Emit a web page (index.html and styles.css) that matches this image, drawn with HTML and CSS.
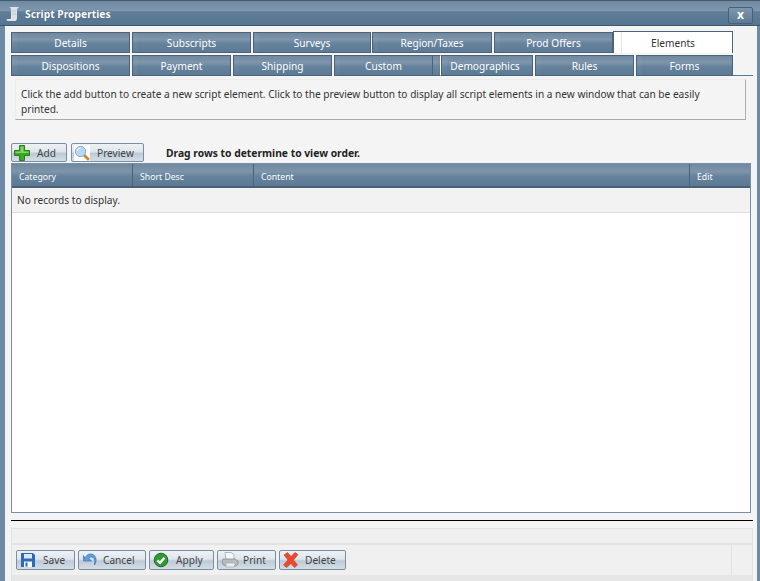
FILE: index.html
```html
<!DOCTYPE html>
<html lang="en">
<head>
<meta charset="utf-8">
<title>Script Properties</title>
<link rel="stylesheet" href="styles.css">
</head>
<body>
<div class="window">
  <header class="titlebar">
    <svg class="title-icon" width="14" height="16" viewBox="0 0 14 16"><path d="M3 1h10l-2 2v9c0 2-1 3-2 3H2c-1 0-2-1-1-2h3c1 0 1-1 1-2V4C5 2 4 1 3 1z" fill="#dfe3e7"/><path d="M6 5h4M6 8h4" stroke="#b9c2ca"/></svg>
    <span class="title-text">Script Properties</span>
    <button class="close">x</button>
  </header>
  <main class="body">
    <div class="tabrow row1">
      <div class="tab t1">Details</div>
      <div class="tab t2">Subscripts</div>
      <div class="tab t3">Surveys</div>
      <div class="tab t4">Region/Taxes</div>
      <div class="tab t5">Prod Offers</div>
      <div class="tab active">Elements</div>
    </div>
    <div class="tabrow row2">
      <div class="tab w120">Dispositions</div>
      <div class="tab w100">Payment</div>
      <div class="tab w100">Shipping</div>
      <div class="tab w100">Custom</div>
      <div class="tab strip"></div>
      <div class="tab demo">Demographics</div>
      <div class="tab w100">Rules</div>
      <div class="tab last">Forms</div>
      <div class="tab-rule"></div>
    </div>
    <div class="info">Click the add button to create a new script element. Click to the preview button to display all script elements in a new window that can be easily printed.</div>
    <div class="toolbar">
      <button class="btn small add">
        <svg width="16" height="16" viewBox="0 0 16 16"><path d="M5.500 .5h5v5h5v5h-5v5h-5v-5h-5v-5h5z" fill="#3fa52a" stroke="#2a7d1e"/><path d="M6.500 1.500h3v5h5v1.500h-13v-1.500h5z" fill="#83d662"/></svg>
        <span>Add</span>
      </button>
      <button class="btn small preview">
        <svg width="16" height="16" viewBox="0 0 16 16"><rect width="16" height="16" fill="#fff"/><path d="M9.500 9.500l4.500 4.500" stroke="#c98a3c" stroke-width="3" stroke-linecap="round"/><circle cx="6.500" cy="6.500" r="5.200" fill="#b5d9f5" stroke="#8ba6c6"/><path d="M3.300 6a3.400 3 0 0 1 3.200-3" stroke="#fff" fill="none"/></svg>
        <span>Preview</span>
      </button>
      <strong class="hint">Drag rows to determine to view order.</strong>
    </div>
    <section class="grid">
      <div class="grid-head">
        <div class="col c-cat">Category</div>
        <div class="col c-desc">Short Desc</div>
        <div class="col c-content">Content</div>
        <div class="col c-edit">Edit</div>
      </div>
      <div class="grid-empty">No records to display.</div>
    </section>
    <hr class="rule">
    <div class="footer">
      <div class="footer-top"></div>
      <div class="footer-main">
        <div class="actions">
          <button class="btn action">
            <svg width="16" height="16" viewBox="0 0 16 16"><path d="M1 1h12l2 2v12H1z" fill="#2e68b8"/><rect x="4" y="2" width="8" height="4.500" fill="#dfe9f4"/><rect x="4" y="9.500" width="8" height="5.500" fill="#f4f7fa"/><rect x="5.500" y="10.500" width="2" height="4" fill="#2e68b8"/></svg>
            <span>Save</span>
          </button>
          <button class="btn action">
            <svg width="16" height="16" viewBox="0 0 16 16"><path d="M3 6.500C4 3 7.500 1 11 2.500c3.500 2 4 6.500 1.500 10.500 .5-3 .5-6-1.500-7.500-1.500-1-3-.5-4 1L9.500 9H1.500V3.500z" fill="#5f9edb" stroke="#3b72ae" stroke-width=".7"/></svg>
            <span>Cancel</span>
          </button>
          <button class="btn action">
            <svg width="16" height="16" viewBox="0 0 16 16"><circle cx="8" cy="8" r="6.800" fill="#2f9a35" stroke="#1e6b24"/><path d="M4.500 8.300l2.500 2.500 4.500-5" fill="none" stroke="#fff" stroke-width="2.400"/></svg>
            <span>Apply</span>
          </button>
          <button class="btn action">
            <svg width="18" height="16" viewBox="0 0 18 16"><path d="M4 .5h6l3 2v5H5z" fill="#f6f7f8" stroke="#a5a9ad" stroke-width=".8"/><path d="M2 7h12l3 2v3l-2 2H5l-3-1.500L1 9z" fill="#b8bbbe" stroke="#888c90" stroke-width=".8"/><path d="M5 11h8l1 1.500-1 2.500H5z" fill="#eceded" stroke="#a2a5a8" stroke-width=".6"/></svg>
            <span>Print</span>
          </button>
          <button class="btn action">
            <svg width="16" height="16" viewBox="0 0 16 16"><path d="M1 3l3.500-2.500L8 4.500 12 .5 15 2.500 10.500 8l4 5-3 2.500L8 11.500 3.500 15.500.5 13 5 8z" fill="#ea4a2e" stroke="#cc351e" stroke-width=".6"/></svg>
            <span>Delete</span>
          </button>
        </div>
        <div class="footer-end"></div>
      </div>
      <div class="footer-band"></div>
    </div>
  </main>
</div>
</body>
</html>
```

FILE: styles.css
```css
* { box-sizing: border-box; }
html, body { margin: 0; padding: 0; }
body {
  width: 760px;
  height: 581px;
  overflow: hidden;
  font-family: "Noto Sans", "Open Sans", sans-serif;
  font-size: 10.150px;
  color: #333;
}
.window {
  width: 760px;
  height: 581px;
  display: flex;
  flex-direction: column;
  background: #6d8aa6;
}
.titlebar {
  height: 26px;
  flex: none;
  display: flex;
  align-items: center;
  padding: 1px 7px 0 6px;
  border-top: 1px solid #46596d;
  border-bottom: 1px solid #3f5568;
  background: linear-gradient(#7089a2 0, #7f97ad 40%, #5f7d98 45%, #567590 100%);
  color: #fff;
}
.title-icon { margin-right: 5px; }
.title-text { font-weight: 700; font-size: 10.300px; text-shadow: 0 0 1px #33495c; }
.close {
  margin-left: auto;
  margin-top: 3px;
  width: 25px;
  height: 17px;
  padding: 0;
  border: 1px solid #46607a;
  border-radius: 2px;
  background: linear-gradient(#7f96ac, #5c7a95);
  color: #fff;
  font: 700 12px/14px "Noto Sans", sans-serif;
}
.body {
  flex: 1;
  min-height: 0;
  margin: 0 3px 0 5px;
  background: #f4f4f4;
  padding-top: 6px;
  display: flex;
  flex-direction: column;
}
.tabrow { display: flex; height: 21px; margin-left: 6px; position: relative; }
.row1 { height: 22px; }
.row2 { margin-top: 1px; gap: 2px; height: 21px; }
.tab {
  height: 21px;
  display: flex;
  align-items: center;
  justify-content: center;
  color: #fff;
  background: linear-gradient(#70899f 0, #7e95ab 35%, #66839d 55%, #5b7a95 100%);
  border: 1px solid #4a637b;
  box-shadow: inset 5px 0 0 rgba(255, 255, 255, .03);
}
.t1 { width: 119px; margin-right: 2px; }
.t2 { width: 119px; margin-right: 2px; }
.t3 { width: 118px; margin-right: 1px; }
.t4 { width: 120px; margin-right: 2px; }
.t5 { width: 119px; }
.w120 { width: 119px; }
.w100 { width: 99px; }
.strip { width: 8px; margin-left: -2px; border-left: 0; border-right: 1px solid #fff; }
.demo { width: 92px; margin-left: -2px; padding-right: 4px; }
.last { width: 97px; }
.active {
  width: 120px;
  height: 22px;
  margin-top: -1px;
  background: linear-gradient(to right, #fff 7px, #e6e6e6 7px, #e6e6e6 8px, #fff 8px);
  color: #333;
  border: 1px solid #4a637b;
  border-bottom: 0;
  box-shadow: none;
}
.tab-rule {
  flex: 1;
  align-self: flex-end;
  height: 1px;
  background: #5b7690;
  margin-left: -2px;
  margin-right: 4px;
}
.info {
  margin: 3px 11px 0 10px;
  height: 41px;
  padding: 7px 40px 0 5px;
  background: #f4f4f4;
  border-top: 1px solid #ececec;
  border-right: 1px solid #b0b0b0;
  border-bottom: 1px solid #a8a8a8;
  border-left: 1px solid #ececec;
  line-height: 15px;
}
.toolbar {
  margin: 23px 0 0 6px;
  display: flex;
  align-items: center;
  height: 19px;
  gap: 4px;
}
.btn {
  display: flex;
  align-items: center;
  padding: 0;
  height: 19px;
  border: 1px solid #7b8fa2;
  border-radius: 2px;
  background: linear-gradient(#eef2f5 0, #dfe6ec 45%, #bccad6 55%, #d5dee6 100%);
  color: #444;
  font-family: "Noto Sans", sans-serif;
  font-size: 10.150px;
}
.small { padding-left: 2px; }
.add { width: 56px; }
.add span { margin-left: 7px; }
.preview { width: 73px; }
.preview span { margin-left: 7px; }
.hint { margin-left: 18px; color: #222; font-size: 10.300px; }
.grid {
  margin: 1px 6px 0 6px;
  height: 350px;
  background: #fff;
  border: 1px solid #7590a8;
  flex: none;
}
.grid-head {
  height: 24px;
  display: flex;
  border-bottom: 2px solid #4a6076;
  background: linear-gradient(#70899f 0, #7e95ab 35%, #66839d 55%, #5b7a95 100%);
  color: #fff;
  font-size: 8.700px;
}
.col {
  display: flex;
  align-items: center;
  padding-left: 7px;
  padding-top: 3px;
  border-right: 1px solid #4a637b;
}
.c-cat { width: 121px; }
.c-desc { width: 121px; }
.c-content { flex: 1; }
.c-edit { width: 60px; border-right: 0; }
.grid-empty {
  height: 25px;
  padding-left: 5px;
  display: flex;
  align-items: center;
  background: #f2f2f2;
  border-bottom: 1px solid #dedede;
}
.rule {
  margin: 7px 4px 0 6px;
  height: 2px;
  border: 0;
  border-top: 1px solid #000;
  flex: none;
}
.footer {
  margin: 6px 4px 0 6px;
  flex: 1;
  min-height: 0;
  display: flex;
  flex-direction: column;
  background: #f0f0f0;
  border-left: 1px solid #e2e2e2;
  border-right: 1px solid #e2e2e2;
  border-top: 1px solid #e2e2e2;
}
.footer-top { height: 16px; flex: none; border-bottom: 2px solid #e2e2e2; }
.footer-main { height: 30px; flex: none; display: flex; }
.actions {
  flex: 1;
  display: flex;
  align-items: center;
  gap: 3px;
  padding: 0 4px;
  border-right: 1px solid #e2e2e2;
}
.footer-end { width: 20px; flex: none; }
.footer-band { flex: 1; background: #e6e6e6; }
.action { padding-left: 3px; height: 20px; }
.action:nth-child(1) { width: 59px; }
.action:nth-child(2) { width: 68px; }
.action:nth-child(3) { width: 65px; }
.action:nth-child(4) { width: 59px; }
.action:nth-child(5) { width: 67px; }
.action:nth-child(1) span { margin-left: 7px; }
.action:nth-child(2) span { margin-left: 5px; }
.action:nth-child(3) span { margin-left: 7px; }
.action:nth-child(4) span { margin-left: 4px; }
.action:nth-child(5) span { margin-left: 6px; }
```
